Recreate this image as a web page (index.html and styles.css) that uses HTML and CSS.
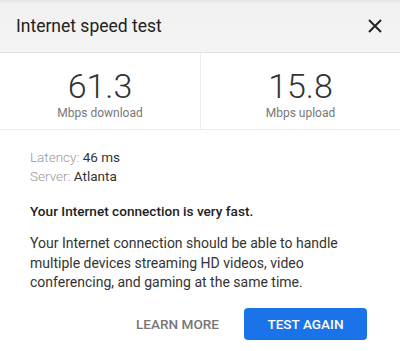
FILE: index.html
```html
<!DOCTYPE html>
<html>
<head>
<meta charset="utf-8">
<link rel="stylesheet" href="styles.css">
</head>
<body>
<div class="dialog">
  <header class="head">
    <h1 class="title">Internet speed test</h1>
    <button class="close" aria-label="Close">
      <svg width="14" height="14" viewBox="0 0 14 14"><path d="M1 1L13 13M13 1L1 13" stroke="#222" stroke-width="2" fill="none"/></svg>
    </button>
  </header>
  <section class="stats">
    <div class="stat">
      <div class="value">61.3</div>
      <div class="unit">Mbps download</div>
    </div>
    <div class="stat">
      <div class="value">15.8</div>
      <div class="unit">Mbps upload</div>
    </div>
  </section>
  <section class="info">
    <div class="meta"><span class="key">Latency:</span> 46 ms</div>
    <div class="meta"><span class="key">Server:</span> Atlanta</div>
    <p class="verdict">Your Internet connection is very fast.</p>
    <p class="desc">Your Internet connection should be able to handle multiple devices streaming HD videos, video conferencing, and gaming at the same time.</p>
  </section>
  <footer class="actions">
    <button class="btn text">LEARN MORE</button>
    <button class="btn primary">TEST AGAIN</button>
  </footer>
</div>
</body>
</html>
```

FILE: styles.css
```css
* { box-sizing: border-box; }
html, body { margin: 0; padding: 0; background: #fff; }
body { font-family: Roboto, "Noto Sans", sans-serif; color: #222; width: 400px; height: 351px; overflow: hidden; }
.dialog { display: flex; flex-direction: column; }
.head {
  height: 53px;
  background: linear-gradient(#e4e4e4 0, #f1f1f1 4px, #f4f4f4 100%);
  border-bottom: 1px solid #e2e2e2;
  display: flex; align-items: center; justify-content: space-between;
  padding: 0 18px 0 16px;
}
.title { margin: 0; font-size: 17.5px; font-weight: 400; color: #222; }
.close { border: 0; background: none; padding: 0; width: 14px; height: 14px; display: flex; }
.stats {
  display: grid; grid-template-columns: 1fr 1fr;
  height: 77px;
  border-bottom: 1px solid #ececec;
}
.stat { display: flex; flex-direction: column; align-items: center; padding-top: 13px; }
.stat + .stat { border-left: 1px solid #ececec; }
.value { font-size: 34px; font-weight: 300; color: #333; line-height: 40px; }
.unit { font-size: 12px; color: #777; line-height: 14px; }
.info { padding: 18px 30px 0 30px; }
.meta { font-size: 13.5px; line-height: 19px; color: #333; }
.key { color: #999; font-weight: 300; }
.verdict { margin: 15px 0 0; font-size: 13.6px; font-weight: 500; line-height: 20px; color: #222; }
.desc { margin: 13px 0 0; font-size: 14px; line-height: 19.5px; color: #333; }
.actions { display: flex; justify-content: flex-end; align-items: center; gap: 14px; padding: 15px 33px 0 0; }
.btn { font-family: Roboto, sans-serif; font-size: 13.6px; font-weight: 500; border: 0; cursor: pointer; }
.btn.text { background: none; color: #777; padding: 0 11px; height: 32px; }
.btn.primary { background: #1a73e8; color: #fff; width: 123px; height: 32px; border-radius: 4px; }
```
